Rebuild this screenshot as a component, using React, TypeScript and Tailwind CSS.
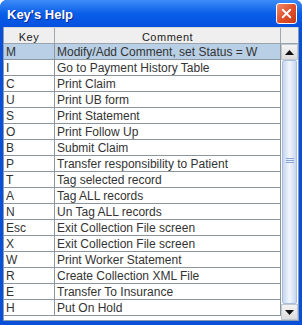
import { X } from "lucide-react"

const rows: [string, string][] = [
  ["M", "Modify/Add Comment, set Status = W"],
  ["I", "Go to Payment History Table"],
  ["C", "Print Claim"],
  ["U", "Print UB form"],
  ["S", "Print Statement"],
  ["O", "Print Follow Up"],
  ["B", "Submit Claim"],
  ["P", "Transfer responsibility to Patient"],
  ["T", "Tag selected record"],
  ["A", "Tag ALL records"],
  ["N", "Un Tag ALL records"],
  ["Esc", "Exit Collection File screen"],
  ["X", "Exit Collection File screen"],
  ["W", "Print Worker Statement"],
  ["R", "Create Collection XML File"],
  ["E", "Transfer To Insurance"],
  ["H", "Put On Hold"],
]

function Arrow({ up }: { up?: boolean }) {
  return (
    <div className="h-[16px] w-full flex items-center justify-center bg-gradient-to-b from-[#f4f4f4] to-[#dcdcdc] border border-[#c0c8d4]">
      <svg width="9" height="5" viewBox="0 0 9 5">
        {up ? <polygon points="4.5,0 9,5 0,5" fill="#111" /> : <polygon points="0,0 9,0 4.5,5" fill="#111" />}
      </svg>
    </div>
  )
}

export default function App() {
  return (
    <div className="w-[302px] h-[325px] rounded-t-[7px] bg-[#0a4fd8] flex flex-col font-['Liberation_Sans',Arial,sans-serif]">
      <div className="h-[27px] shrink-0 rounded-t-[7px] bg-gradient-to-b from-[#3c8cf8] via-[#0a5ee8] to-[#0550e0] flex items-center justify-between pl-[7px] pr-[5px]">
        <span className="text-white font-bold text-[13px] pt-[2px] [text-shadow:1px_1px_0_#0a2a90]">Key's Help</span>
        <div className="w-[21px] h-[21px] rounded-[3px] border border-white bg-gradient-to-br from-[#f08a6a] via-[#e0502a] to-[#c83a18] flex items-center justify-center">
          <X size={15} strokeWidth={3} color="white" />
        </div>
      </div>
      <div className="flex-1 mx-[3px] mb-[4px] bg-white border-x border-b border-[#8a9ab0] flex">
        <div className="flex-1 flex flex-col">
          <div className="h-[17px] flex bg-[#efefef] border-y border-[#d8d8d8] border-b-[#9aa4ae] text-[11px] text-[#222] leading-[12px] tracking-[0.5px]">
            <div className="w-[51px] pt-[3px] text-center border-r border-[#a0a8b0]">Key</div>
            <div className="flex-1 pt-[3px] text-center border-r border-[#a0a8b0]">Comment</div>
          </div>
          {rows.map(([k, c], i) => (
            <div
              key={i}
              className={`h-[16px] flex border-b border-[#8c969e] text-[12px] leading-[14px] text-[#333] ${i === 0 ? "bg-[#b8cfe5]" : ""}`}
            >
              <div className="w-[51px] pl-[2px] pt-[1px] border-r border-[#8c969e]">{k}</div>
              <div className="flex-1 pl-[2px] pt-[1px] border-r border-[#8c969e] whitespace-nowrap overflow-hidden">{c}</div>
            </div>
          ))}
        </div>
        <div className="w-[17px] flex flex-col">
          <div className="h-[17px] bg-[#efefef] border-y border-[#d8d8d8] border-b-[#9aa4ae]" />
          <Arrow up />
          <div className="flex-1 mx-[1px] rounded-[2px] border border-[#a8bcdc] bg-gradient-to-r from-[#c6d6f2] via-[#f2f6fd] to-[#c6d6f2] flex justify-center">
            <div className="flex flex-col gap-[1px] mt-[97px]">
              <div className="w-[8px] h-[1px] bg-[#8aa4d8]" />
              <div className="w-[8px] h-[1px] bg-[#8aa4d8]" />
              <div className="w-[8px] h-[1px] bg-[#8aa4d8]" />
            </div>
          </div>
          <Arrow />
        </div>
      </div>
    </div>
  )
}
